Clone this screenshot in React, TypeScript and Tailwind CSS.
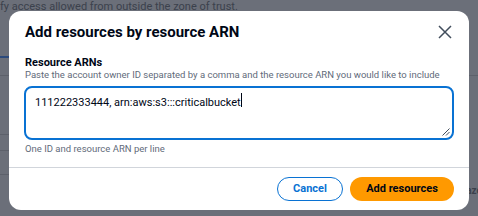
import React from 'react';

const App: React.FC = () => {
  return (
    <div className="relative w-[478px] h-[216px] overflow-hidden bg-[#6b6f79] font-['Roboto','Noto_Sans',Arial,sans-serif]">
      {/* page behind the overlay */}
      <div className="flex flex-col">
        <div className="-ml-[19px] text-[11px] leading-[13px] text-[#3b414c] whitespace-nowrap">
          Verify access allowed from outside the zone of trust.
        </div>
        <div className="mt-[43px] w-[12px] h-[1.5px] bg-[#2c4a7c]" />
        <div className="mt-[17px] w-full h-[1px] bg-[#5d616b]" />
        <div className="mt-[58px] w-[12px] h-[1px] bg-[#5d616b]" />
        <div className="mt-[15px] w-[12px] h-[1px] bg-[#5d616b]" />
        <div className="mt-[23px] w-[12px] h-[1px] bg-[#5d616b]" />
        <div className="mt-[10px] self-end -mr-[4px] text-[10px] leading-[12px] font-bold text-[#3b414c]">aze</div>
      </div>

      {/* modal */}
      <div className="absolute left-[9px] top-[11px] w-[460px] h-[199px] rounded-[12px] bg-white flex flex-col">
        <div className="flex items-start justify-between pl-4 pr-[17px] pt-[12px]">
          <h2 className="text-[15px] leading-[18px] font-bold text-[#000716]">
            Add resources by resource ARN
          </h2>
          <button className="mt-[2px] w-[14px] h-[14px] flex items-center justify-center text-[#414d5c]">
            <svg width="14" height="14" viewBox="0 0 14 14" fill="none">
              <path d="M1 1L13 13M13 1L1 13" stroke="currentColor" strokeWidth="1.5" />
            </svg>
          </button>
        </div>

        <div className="px-4 pt-[15px] flex flex-col">
          <div className="text-[11px] leading-[13px] font-bold text-[#000716]">Resource ARNs</div>
          <div className="text-[9.5px] leading-[12px] text-[#5f6b7a] whitespace-nowrap">
            Paste the account owner ID separated by a comma and the resource ARN you would like to include
          </div>
          <div className="relative mt-[5px] -ml-[1px] w-[430px] h-[54px] rounded-[8px] border-2 border-[#0972d3] pl-[9px] pt-[1px]">
            <span className="text-[11px] leading-[16px] text-[#000716]">
              111222333444, arn:aws:s3:::criticalbucket
            </span>
            <span className="inline-block w-[1px] h-[14px] bg-[#000716] align-middle -mt-[3px]" />
            <svg className="absolute right-[2px] bottom-[2px]" width="9" height="9" viewBox="0 0 9 9">
              <path d="M8.5 1.5L1.5 8.5M8.5 5L5 8.5" stroke="#414d5c" strokeWidth="1" />
            </svg>
          </div>
          <div className="mt-[3px] text-[9.5px] leading-[12px] text-[#5f6b7a]">One ID and resource ARN per line</div>
        </div>

        <div className="mt-[12px] border-t border-[#d1d5db]" />

        <div className="flex justify-end gap-[7px] pr-[15px] pt-[9px]">
          <button className="w-[66px] h-[24px] rounded-full border-[1.5px] border-[#0972d3] text-[11px] font-bold text-[#0972d3] flex items-center justify-center">
            Cancel
          </button>
          <button className="w-[104px] h-[24px] rounded-full bg-[#ff9900] text-[11px] font-bold text-[#000716] flex items-center justify-center">
            Add resources
          </button>
        </div>
      </div>
    </div>
  );
};

export default App;
